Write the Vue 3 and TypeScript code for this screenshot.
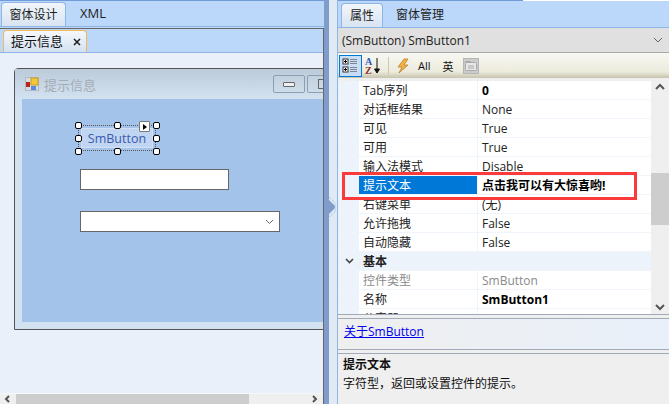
<script setup lang="ts">
interface PropRow {
  name: string
  value: string
  bold?: boolean
  muted?: boolean
  selected?: boolean
  group?: boolean
}

const rows: PropRow[] = [
  { name: 'Tab序列', value: '0', bold: true },
  { name: '对话框结果', value: 'None' },
  { name: '可见', value: 'True' },
  { name: '可用', value: 'True' },
  { name: '输入法模式', value: 'Disable' },
  { name: '提示文本', value: '点击我可以有大惊喜哟!', bold: true, selected: true },
  { name: '右键菜单', value: '(无)' },
  { name: '允许拖拽', value: 'False' },
  { name: '自动隐藏', value: 'False' },
  { name: '基本', value: '', group: true },
  { name: '控件类型', value: 'SmButton', muted: true },
  { name: '名称', value: 'SmButton1', bold: true },
  { name: '父容器', value: '' },
]

const handles = [
  { x: 0, y: 0 }, { x: 39, y: 0 }, { x: 78, y: 0 },
  { x: 0, y: 13 }, { x: 78, y: 13 },
  { x: 0, y: 26 }, { x: 39, y: 26 }, { x: 78, y: 26 },
]
</script>

<template>
  <div class="app">
    <section class="left">
      <div class="tabs">
        <div class="tab active">窗体设计</div>
        <div class="tab xml">XML</div>
      </div>
      <div class="doc">
        <div class="doc-tabs">
          <div class="doc-tab">
            提示信息
            <svg class="close" width="8" height="8" viewBox="0 0 8 8"><path d="M1 1l6 6M7 1L1 7" stroke="#222" stroke-width="1.6" /></svg>
          </div>
        </div>
        <div class="surface">
          <div class="form">
            <div class="form-title">
              <svg class="form-icon" width="14" height="14" viewBox="0 0 14 14">
                <rect x="0.5" y="0.5" width="13" height="13" fill="#d8dde2" stroke="#b4b8bc" />
                <rect x="6" y="1" width="7" height="7" fill="#f5c93c" stroke="#c79a22" />
                <rect x="1" y="5" width="4" height="5" fill="#b3261e" />
                <rect x="6" y="9" width="5" height="4" fill="#5b8bdc" />
              </svg>
              <span>提示信息</span>
              <div class="win-btns">
                <div class="win-btn"><i class="min"></i></div>
                <div class="win-btn"><i class="max"></i></div>
              </div>
            </div>
            <div class="client">
              <div class="selection">
                <div class="sm-button">SmButton</div>
                <i v-for="(h, i) in handles" :key="i" class="handle" :style="{ left: h.x + 'px', top: h.y + 'px' }"></i>
                <div class="smart-tag"><i></i></div>
              </div>
              <div class="textbox"></div>
              <div class="combo">
                <svg width="9" height="6" viewBox="0 0 9 6"><path d="M1 1l3.5 3.5L8 1" fill="none" stroke="#666" /></svg>
              </div>
            </div>
          </div>
        </div>
        <div class="hscroll">
          <svg width="16" height="10" viewBox="0 0 16 10"><path d="M9 2L6 5l3 3" fill="none" stroke="#555" stroke-width="2" /></svg>
          <div class="hthumb"></div>
          <div class="hspace"></div>
          <svg width="16" height="10" viewBox="0 0 16 10"><path d="M6 2l3 3-3 3" fill="none" stroke="#555" stroke-width="2" /></svg>
        </div>
      </div>
    </section>

    <div class="splitter">
      <div class="split-dark"></div>
      <div class="split-light">
        <svg width="7" height="20" viewBox="0 0 7 20"><path d="M0 3l6 6v2l-6 6z" fill="#7f9ccb" /><path d="M0 0l6 6v9l-6 5" fill="none" stroke="#9db6dc" stroke-dasharray="1 1" /></svg>
      </div>
    </div>

    <section class="right">
      <div class="tabs rtabs">
        <div class="tab active rtab">属性</div>
        <div class="tab">窗体管理</div>
      </div>
      <div class="selector">
        <span>(SmButton) SmButton1</span>
        <svg width="10" height="6" viewBox="0 0 10 6"><path d="M1 1l4 4 4-4" fill="none" stroke="#666" /></svg>
      </div>
      <div class="toolbar">
        <div class="tool checked">
          <svg width="17" height="17" viewBox="0 0 17 17">
            <rect x="1" y="2" width="5" height="5" fill="#fff" stroke="#333" />
            <path d="M2 4.5h3M3.5 3v3" stroke="#000" />
            <rect x="1" y="10" width="5" height="5" fill="#fff" stroke="#333" />
            <path d="M2 12.5h3M3.5 11v3" stroke="#000" />
            <path d="M8 2.5h7M8 4.5h7M8 6.5h7M8 10.5h7M8 12.5h7M8 14.5h7" stroke="#7d8794" />
          </svg>
        </div>
        <svg class="az" width="18" height="18" viewBox="0 0 18 18">
          <text x="1" y="8" class="az-a">A</text>
          <text x="1" y="17" class="az-z">Z</text>
          <path d="M13 1v14M10.5 12l2.5 4 2.5-4z" stroke="#111" fill="#111" />
        </svg>
        <div class="tool-sep"></div>
        <svg class="bolt" width="14" height="16" viewBox="0 0 14 16">
          <path d="M8 1L2 9h4l-3 6 9-8H8l4-6z" fill="#f3b23c" stroke="#b9803a" stroke-width=".8" />
        </svg>
        <span class="tool-text all">All</span>
        <span class="tool-text ying">英</span>
        <svg class="pages" width="16" height="16" viewBox="0 0 16 16">
          <rect x=".5" y=".5" width="15" height="15" fill="#ccc" stroke="#b5b5b5" />
          <rect x="2.5" y="4.5" width="11" height="8" rx="1" fill="#e8e8e8" stroke="#a9a9a9" />
          <path d="M2.5 4.5h5v-1h-5zM5 8h6M5 10h6" stroke="#a9a9a9" fill="none" />
        </svg>
      </div>
      <div class="grid-wrap">
        <div class="grid">
          <div v-for="row in rows" :key="row.name" class="row" :class="{ group: row.group, selected: row.selected }">
            <div class="gutter">
              <svg v-if="row.group" width="9" height="6" viewBox="0 0 9 6"><path d="M1 1l3.5 3.5L8 1" fill="none" stroke="#444" stroke-width="1.6" /></svg>
            </div>
            <div class="name" :class="{ muted: row.muted }">{{ row.name }}</div>
            <div class="value" :class="{ bold: row.bold, muted: row.muted }">{{ row.value }}</div>
          </div>
        </div>
        <div class="vscroll">
          <svg width="18" height="14" viewBox="0 0 18 14"><path d="M5 8l4-4 4 4" fill="none" stroke="#555" stroke-width="2" /></svg>
          <div class="vspace top"></div>
          <div class="vthumb"></div>
          <div class="vspace"></div>
          <svg width="18" height="14" viewBox="0 0 18 14"><path d="M5 5l4 4 4-4" fill="none" stroke="#555" stroke-width="2" /></svg>
        </div>
        <div class="red-box"></div>
      </div>
      <div class="link-panel"><a class="link">关于SmButton</a></div>
      <div class="desc">
        <div class="desc-title">提示文本</div>
        <div>字符型，返回或设置控件的提示。</div>
      </div>
    </section>
  </div>
</template>

<style>
html, body {
  margin: 0;
  background: #fff;
}
</style>

<style scoped>
.app {
  width: 669px;
  height: 404px;
  overflow: hidden;
  display: flex;
  font-family: "Open Sans", "Noto Sans CJK SC", sans-serif;
  font-size: 12px;
  color: #222;
  background: #bbd8fb;
}

.left {
  width: 324px;
  flex: none;
  display: flex;
  flex-direction: column;
  border-top: 1px solid #6f9bd6;
  box-sizing: border-box;
}

.tabs {
  height: 26px;
  flex: none;
  display: flex;
  align-items: flex-end;
  padding-left: 1px;
  background: #bbd8fb;
  border-bottom: 1px solid #8fb4e6;
  box-sizing: border-box;
}

.tab {
  height: 24px;
  line-height: 23px;
  padding: 0 13px;
  box-sizing: border-box;
}

.tab.xml {
  font-size: 13px;
  padding-left: 14px;
}

.tab.active {
  width: 65px;
  padding: 0;
  text-align: center;
  border: 1px solid #8fb4e6;
  border-bottom: none;
  border-radius: 4px 4px 0 0;
  background: linear-gradient(#f2f6fb, #d8e4f2);
}

.doc {
  flex: 1;
  display: flex;
  flex-direction: column;
  min-height: 0;
  margin-top: 1px;
  border-top: 1px solid #666;
  border-right: 1px solid #666;
  background: #e9f0fa;
}

.doc-tabs {
  height: 24px;
  flex: none;
  display: flex;
  align-items: flex-end;
  padding-left: 3px;
  background: #bbd8fb;
  border-bottom: 1px solid #8fb4e6;
  box-sizing: border-box;
}

.doc-tab {
  width: 84px;
  height: 22px;
  line-height: 21px;
  padding-left: 7px;
  box-sizing: border-box;
  display: flex;
  align-items: center;
  font-size: 13px;
  color: #111;
  border: 1px solid #f0b95a;
  border-bottom: none;
  border-radius: 4px 4px 0 0;
  background: linear-gradient(#f5f8fc, #d4e1f0);
}

.close {
  margin-left: 10px;
}

.surface {
  flex: 1;
  min-height: 0;
  overflow: hidden;
  padding: 15px 0 0 14px;
}

.form {
  width: 340px;
  height: 262px;
  box-sizing: border-box;
  border: 1px solid #555;
  border-radius: 4px 4px 0 0;
  padding: 0 7px 7px;
  background: #d3e2f1;
  display: flex;
  flex-direction: column;
}

.form-title {
  height: 30px;
  flex: none;
  margin: 0 -7px;
  padding-left: 10px;
  display: flex;
  align-items: center;
  gap: 5px;
  color: #a4acb5;
  font-size: 13px;
  background: linear-gradient(#bccbda, #d3e2f1);
}

.form-icon {
  flex: none;
}

.win-btns {
  margin-left: 172px;
  display: flex;
  gap: 2px;
}

.win-btn {
  width: 32px;
  height: 18px;
  flex: none;
  box-sizing: border-box;
  display: flex;
  align-items: center;
  justify-content: center;
  border: 1px solid #8d9db3;
  border-radius: 2px;
  background: linear-gradient(#c3d1df, #cfdcea);
}

.win-btn .min {
  width: 10px;
  height: 3px;
  border: 1px solid #666;
  background: #eee;
  border-radius: 1px;
}

.win-btn .max {
  width: 9px;
  height: 8px;
  border: 1px solid #666;
}

.client {
  flex: 1;
  position: relative;
  background: #a3c3ea;
}

.selection {
  position: absolute;
  left: 56px;
  top: 26px;
  width: 78px;
  height: 26px;
  border: 1px dotted #555;
  box-sizing: border-box;
}

.sm-button {
  position: absolute;
  inset: 2px;
  display: flex;
  align-items: center;
  justify-content: center;
  color: #3c5bb0;
  font-size: 12.5px;
  border: 1px solid #d3e0f3;
  background: #bfd5f1;
}

.handle {
  position: absolute;
  width: 7px;
  height: 7px;
  margin: -4px 0 0 -4px;
  box-sizing: border-box;
  border: 1px solid #000;
  border-radius: 2px;
  background: #fff;
}

.smart-tag {
  position: absolute;
  left: 60px;
  top: -5px;
  width: 9px;
  height: 9px;
  border: 1px solid #777;
  border-radius: 1px;
  background: #fff;
  display: flex;
  align-items: center;
  justify-content: center;
}

.smart-tag i {
  border-left: 4px solid #000;
  border-top: 3px solid transparent;
  border-bottom: 3px solid transparent;
}

.textbox,
.combo {
  position: absolute;
  left: 58px;
  box-sizing: border-box;
  border: 1px solid #666;
  background: #fff;
}

.textbox {
  top: 70px;
  width: 149px;
  height: 21px;
}

.combo {
  top: 112px;
  width: 200px;
  height: 21px;
  display: flex;
  align-items: center;
  justify-content: flex-end;
  padding-right: 5px;
}

.hscroll {
  height: 10px;
  flex: none;
  display: flex;
  align-items: flex-start;
  background: #efefef;
  border-top: 1px solid #f7f7f7;
}

.hthumb {
  width: 233px;
  height: 10px;
  background: #cdcdcd;
}

.hspace {
  flex: 1;
}

.splitter {
  width: 13px;
  flex: none;
  display: flex;
}

.split-dark {
  width: 5px;
  background: #7f9ccb;
}

.split-light {
  flex: 1;
  padding-top: 197px;
  background: #dfeaf5;
  box-sizing: border-box;
}

.split-light svg {
  display: block;
}

.right {
  flex: 1;
  min-width: 0;
  display: flex;
  flex-direction: column;
  border-left: 1px solid #8fb4e6;
  background: #efefef;
}

.rtabs {
  height: 28px;
  padding-left: 3px;
  background:
    linear-gradient(#6f9bd6, #6f9bd6) 0 0 / 185px 1px no-repeat,
    linear-gradient(#fff, #fff) 0 0 / 100% 1px no-repeat,
    #bbd8fb;
}

.tab.active.rtab {
  width: 42px;
}

.selector {
  height: 25px;
  flex: none;
  box-sizing: border-box;
  display: flex;
  align-items: center;
  justify-content: space-between;
  padding: 0 6px 0 4px;
  background: #e0e0e0;
  border-bottom: 1px solid #a9a9a9;
}

.toolbar {
  height: 25px;
  flex: none;
  box-sizing: border-box;
  display: flex;
  align-items: center;
  padding-left: 1px;
  background: linear-gradient(#f8f8f4, #ecebdc 75%, #c6c3ad);
}

.tool {
  width: 23px;
  height: 22px;
  box-sizing: border-box;
  display: flex;
  align-items: center;
  justify-content: center;
  border: 1px solid #0078d7;
  background: #c9def5;
}

.az {
  margin-left: 2px;
}

.az-a,
.az-z {
  font-family: "Liberation Serif", serif;
  font-size: 10px;
  font-weight: 700;
}

.az-a {
  fill: #2a5bbd;
}

.az-z {
  fill: #8c2f2f;
}

.tool-sep {
  width: 1px;
  height: 17px;
  margin: 0 7px 0 6px;
  background: #c9c8b8;
}

.tool-text {
  font-size: 11px;
  color: #111;
}

.all {
  margin-left: 8px;
}

.ying {
  margin-left: 12px;
}

.pages {
  margin-left: 9px;
}

.grid-wrap {
  height: 234px;
  flex: none;
  position: relative;
  display: flex;
  margin-top: 3px;
  border-bottom: 1px solid #a0aab8;
  box-sizing: border-box;
}

.grid {
  width: 313px;
  flex: none;
  overflow: hidden;
  background: #edf3fb;
}

.row {
  height: 19px;
  display: flex;
  line-height: 20px;
  border-bottom: 1px solid #f0f5fc;
  box-sizing: border-box;
}

.gutter {
  width: 21px;
  flex: none;
  display: flex;
  align-items: center;
  padding-left: 7px;
  box-sizing: border-box;
}

.name {
  width: 119px;
  flex: none;
  padding-left: 4px;
  box-sizing: border-box;
  background: #fff;
  border-right: 1px solid #f0f5fc;
}

.value {
  flex: 1;
  padding-left: 4px;
  background: #fff;
  white-space: nowrap;
}

.bold {
  font-weight: 700;
  color: #000;
}

.muted {
  color: #8a8a8a;
}

.row.group .name,
.row.group .value {
  background: transparent;
  border-right: none;
  font-weight: 700;
}

.row.selected .name {
  background: #0078d7;
  color: #fff;
}

.vscroll {
  flex: 1;
  display: flex;
  flex-direction: column;
  background: #efefef;
}

.vspace {
  flex: 1;
}

.vspace.top {
  flex: none;
  height: 78px;
}

.vthumb {
  height: 52px;
  background: #cdcdcd;
}

.red-box {
  position: absolute;
  left: 4px;
  top: 91px;
  width: 295px;
  height: 28px;
  box-sizing: border-box;
  border: 3px solid #fb3b3b;
}

.link-panel {
  height: 32px;
  flex: none;
  box-sizing: border-box;
  margin-top: 3px;
  padding: 3px 6px;
  background: linear-gradient(90deg, #efefef, #e9f0fa);
  border-top: 1px solid #a0aab8;
  border-bottom: 1px solid #a0aab8;
}

.link {
  color: #0000ee;
  text-decoration: underline;
}

.desc {
  flex: 1;
  margin-top: 3px;
  padding: 1px 5px;
  line-height: 19px;
  border-top: 1px solid #a0aab8;
  color: #111;
}

.desc-title {
  font-weight: 700;
}
</style>
